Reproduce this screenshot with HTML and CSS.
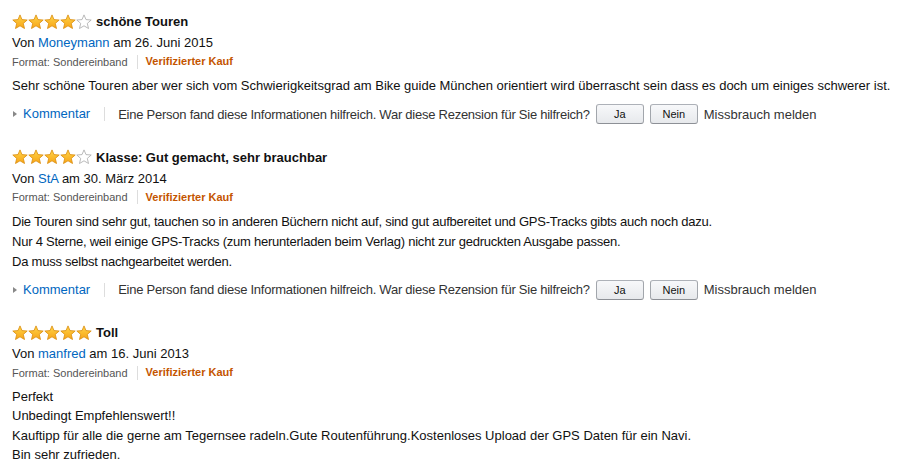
FILE: index.html
```html
<!DOCTYPE html>
<html>

<head>
    <meta charset="utf-8"/>
    <title>Kundenrezensionen</title>
    <meta name="viewport" content="width=device-width, initial-scale=1">
    <link rel="stylesheet" href="styles.css">
</head>

<body>
<svg class="defs" width="0" height="0" aria-hidden="true">
    <defs>
        <linearGradient id="starFill" x1="0" y1="0" x2="0" y2="1">
            <stop offset="0" stop-color="#ffd54a"/>
            <stop offset="1" stop-color="#f7a416"/>
        </linearGradient>
        <symbol id="star" viewBox="0 0 16 16">
            <path d="M8 0.9 L10 5.6 L15.2 6 L11.3 9.4 L12.5 14.5 L8 11.8 L3.5 14.5 L4.7 9.4 L0.8 6 L6 5.6 Z"/>
        </symbol>
    </defs>
</svg>

<div class="reviews">

    <div class="review">
        <div class="review-title">
            <span class="stars">
                <svg class="star full"><use href="#star"/></svg>
                <svg class="star full"><use href="#star"/></svg>
                <svg class="star full"><use href="#star"/></svg>
                <svg class="star full"><use href="#star"/></svg>
                <svg class="star empty"><use href="#star"/></svg>
            </span>
            <b>schöne Touren</b>
        </div>
        <div class="review-byline">Von <a href="#">Moneymann</a> am 26. Juni 2015</div>
        <div class="review-meta">
            <span class="format">Format: Sondereinband</span>
            <span class="verified">Verifizierter Kauf</span>
        </div>
        <div class="review-text">
            Sehr schöne Touren aber wer sich vom Schwierigkeitsgrad am Bike guide München orientiert wird überrascht sein dass es doch um einiges schwerer ist.
        </div>
        <div class="review-actions">
            <a href="#" class="comment">Kommentar</a>
            <span class="helpful">Eine Person fand diese Informationen hilfreich. War diese Rezension für Sie hilfreich?</span>
            <button class="vote">Ja</button>
            <button class="vote">Nein</button>
            <span class="report">Missbrauch melden</span>
        </div>
    </div>

    <div class="review">
        <div class="review-title">
            <span class="stars">
                <svg class="star full"><use href="#star"/></svg>
                <svg class="star full"><use href="#star"/></svg>
                <svg class="star full"><use href="#star"/></svg>
                <svg class="star full"><use href="#star"/></svg>
                <svg class="star empty"><use href="#star"/></svg>
            </span>
            <b>Klasse: Gut gemacht, sehr brauchbar</b>
        </div>
        <div class="review-byline">Von <a href="#">StA</a> am 30. März 2014</div>
        <div class="review-meta">
            <span class="format">Format: Sondereinband</span>
            <span class="verified">Verifizierter Kauf</span>
        </div>
        <div class="review-text narrow">
            Die Touren sind sehr gut, tauchen so in anderen Büchern nicht auf, sind gut aufbereitet und GPS-Tracks gibts auch noch dazu.<br>
            Nur 4 Sterne, weil einige GPS-Tracks (zum herunterladen beim Verlag) nicht zur gedruckten Ausgabe passen.<br>
            Da muss selbst nachgearbeitet werden.
        </div>
        <div class="review-actions">
            <a href="#" class="comment">Kommentar</a>
            <span class="helpful">Eine Person fand diese Informationen hilfreich. War diese Rezension für Sie hilfreich?</span>
            <button class="vote">Ja</button>
            <button class="vote">Nein</button>
            <span class="report">Missbrauch melden</span>
        </div>
    </div>

    <div class="review">
        <div class="review-title">
            <span class="stars">
                <svg class="star full"><use href="#star"/></svg>
                <svg class="star full"><use href="#star"/></svg>
                <svg class="star full"><use href="#star"/></svg>
                <svg class="star full"><use href="#star"/></svg>
                <svg class="star full"><use href="#star"/></svg>
            </span>
            <b>Toll</b>
        </div>
        <div class="review-byline">Von <a href="#">manfred</a> am 16. Juni 2013</div>
        <div class="review-meta">
            <span class="format">Format: Sondereinband</span>
            <span class="verified">Verifizierter Kauf</span>
        </div>
        <div class="review-text tight">
            Perfekt<br>
            Unbedingt Empfehlenswert!!<br>
            Kauftipp für alle die gerne am Tegernsee radeln.Gute Routenführung.Kostenloses Upload der GPS Daten für ein Navi.<br>
            Bin sehr zufrieden.
        </div>
        <div class="review-actions">
            <a href="#" class="comment">Kommentar</a>
            <span class="helpful short">Fanden Sie diese Informationen hilfreich?</span>
            <button class="vote">Ja</button>
            <button class="vote">Nein</button>
            <span class="report">Missbrauch melden</span>
        </div>
    </div>

</div>
</body>

</html>
```

FILE: styles.css
```css
body {
    font-family: "Liberation Sans", Arial, sans-serif;
    font-size: 13px;
    color: #111;
    margin: 0;
    background: #fff;
}

.defs {
    position: absolute;
}

a {
    color: #0066c0;
    text-decoration: none;
}

.reviews {
    padding: 12px 12px 0;
}

.review {
    margin-bottom: 23.5px;
}

.review-title {
    display: flex;
    align-items: center;
    height: 19px;
}

.review-title b {
    font-size: 13px;
    margin-left: 4px;
}

.stars {
    display: flex;
}

.star {
    width: 16px;
    height: 16px;
}

.star.full {
    fill: url(#starFill);
    stroke: #d98c0c;
    stroke-width: 0.8;
}

.star.empty {
    fill: #fff;
    stroke: #a8a8a8;
    stroke-width: 0.8;
}

.review-byline {
    line-height: 19px;
    margin-top: 2px;
}

.review-meta {
    display: flex;
    align-items: center;
    font-size: 11px;
    line-height: 19px;
}

.format {
    color: #555;
    padding-right: 9px;
    border-right: 1px solid #ddd;
    line-height: 14px;
}

.verified {
    color: #c45500;
    font-weight: bold;
    padding-left: 8px;
}

.review-text {
    margin-top: 5px;
    line-height: 20px;
}

.review-text.narrow {
    letter-spacing: -0.23px;
}

.review-text.tight {
    line-height: 19.4px;
}

.review-actions {
    display: flex;
    align-items: center;
    margin-top: 8px;
    height: 20px;
}

.comment {
    display: flex;
    align-items: center;
    padding-left: 11px;
    padding-right: 14px;
    border-right: 1px solid #ddd;
    line-height: 14px;
    position: relative;
}

.comment::before {
    content: "";
    position: absolute;
    left: 1px;
    top: 4px;
    border-left: 4px solid #888;
    border-top: 3px solid transparent;
    border-bottom: 3px solid transparent;
}

.helpful {
    color: #333;
    padding-left: 13px;
    margin-right: 6px;
    letter-spacing: -0.25px;
}

.helpful.short {
    letter-spacing: -0.45px;
}

.vote {
    font-family: inherit;
    font-size: 11px;
    color: #111;
    width: 48px;
    height: 20px;
    padding: 0;
    margin-right: 6px;
    border: 1px solid;
    border-color: #adb1b8 #a2a6ac #8d9096;
    border-radius: 3px;
    background: linear-gradient(to bottom, #f7f8fa, #e7e9ec);
}

.report {
    color: #333;
}
```
